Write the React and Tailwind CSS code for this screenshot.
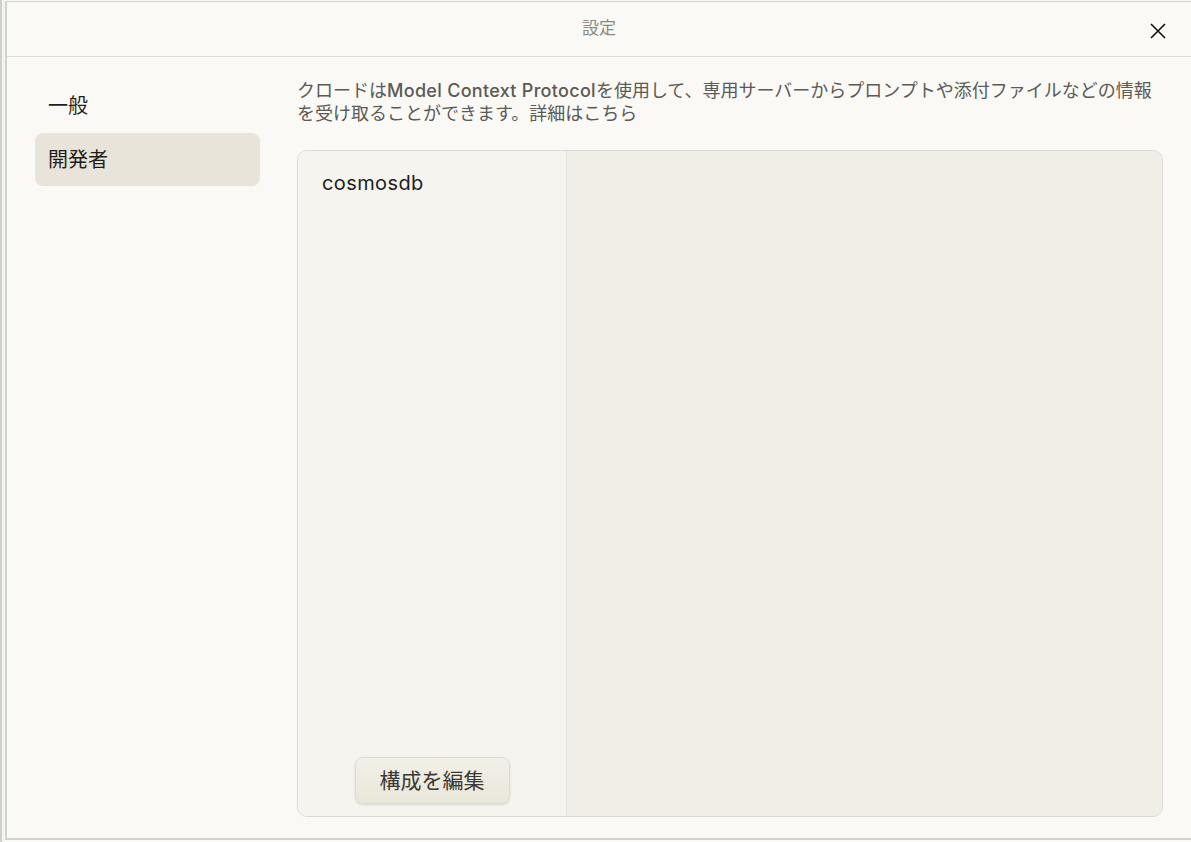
import { useState } from "react";

const font = { fontFamily: '"Inter", "Noto Sans CJK JP", sans-serif' };

const navItems = ["一般", "開発者"];

function CloseIcon() {
  return (
    <svg width="16" height="16" viewBox="0 0 16 16" fill="none">
      <path d="M1 1L15 15M15 1L1 15" stroke="#111" strokeWidth="1.6" />
    </svg>
  );
}

export default function App() {
  const [active, setActive] = useState("開発者");

  return (
    <div
      className="flex h-[842px] w-[1191px] overflow-hidden bg-[#faf9f5]"
      style={font}
    >
      {/* outer frame strip */}
      <div className="w-[5px] border-l-2 border-[#cfcfcc] bg-[#f4f4f2]" />

      <div className="mb-[2px] mt-px flex flex-1 flex-col border-b-2 border-l-2 border-t border-[#d2d2cf] bg-[#faf9f5]">
        {/* header */}
        <header className="relative flex h-[55px] shrink-0 items-center justify-center border-b border-[#deddd7]">
          <span className="text-[17px] text-[#8b8a85]">設定</span>
          <button className="absolute right-[25px] top-[21px]">
            <CloseIcon />
          </button>
        </header>

        <div className="flex min-h-0 flex-1">
          {/* sidebar */}
          <nav className="flex w-[260px] shrink-0 flex-col gap-px pl-[28px] pt-[22px]">
            {navItems.map((item) => (
              <button
                key={item}
                onClick={() => setActive(item)}
                className={`flex h-[53px] w-[225px] items-center rounded-lg px-[13px] text-left text-[20px] text-[#1f1e1b] ${
                  active === item ? "bg-[#e8e4d9]" : ""
                }`}
              >
                {item}
              </button>
            ))}
          </nav>

          {/* main */}
          <main className="flex min-w-0 flex-1 flex-col pb-[21px] pl-[30px] pr-[28px] pt-[22px]">
            <p className="mb-[25px] text-[18px] leading-[23px] text-[#5c5a55]">
              クロードは
              <span className="font-medium tracking-[0.3px]">Model Context Protocol</span>
              を使用して、専用サーバーからプロンプトや添付ファイルなどの情報を受け取ることができます。詳細はこちら
            </p>

            <div className="flex min-h-0 flex-1 overflow-hidden rounded-[10px] border border-[#dcdad3]">
              <div className="flex w-[269px] shrink-0 flex-col border-r border-[#e4e2da] bg-[#f5f4ef]">
                <div className="px-[24px] pt-[18px] text-[20px] leading-[28px] tracking-[0.4px] text-[#1f1e1b]">
                  cosmosdb
                </div>
                <button className="mb-[12px] mt-auto flex h-[47px] w-[155px] items-center justify-center self-center rounded-lg border border-[#dedbce] bg-gradient-to-b from-[#f2f0e8] to-[#e9e6da] text-[21px] text-[#3b3933] shadow-sm">
                  構成を編集
                </button>
              </div>
              <div className="flex-1 bg-[#f0eee6]" />
            </div>
          </main>
        </div>
      </div>
    </div>
  );
}
